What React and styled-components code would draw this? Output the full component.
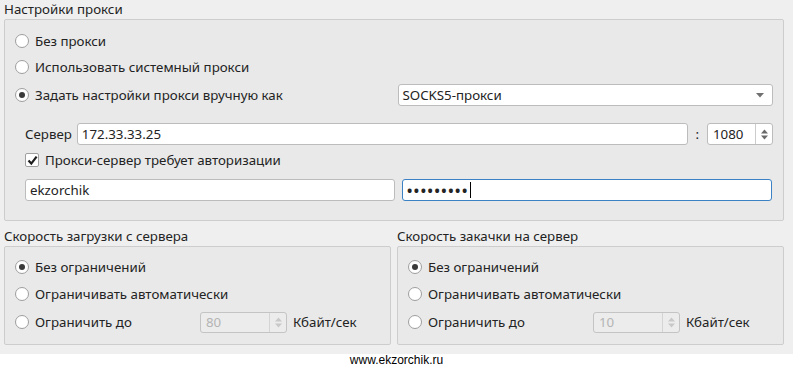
import React from 'react';
import styled, { createGlobalStyle } from 'styled-components';

const Global = createGlobalStyle`
  html, body { margin: 0; padding: 0; background: #ffffff; }
  body { font-family: "Noto Sans", "DejaVu Sans", sans-serif; font-size: 13.3px; color: #232323; }
`;

const Page = styled.div`
  width: 793px;
  height: 368px;
  display: flex;
  flex-direction: column;
`;

const Window = styled.div`
  height: 354px;
  box-sizing: border-box;
  background: #efefef;
  padding: 0 9px 0 4px;
  display: flex;
  flex-direction: column;
`;

const GroupTitle = styled.div`
  height: 19px;
  line-height: 19px;
  white-space: nowrap;
`;

const Frame = styled.div`
  border: 1px solid #cdcdcd;
  border-radius: 2px;
  background: #e9e9e9;
  padding: ${p => p.$pad};
  display: flex;
  flex-direction: column;
`;

const Row = styled.div`
  height: 24px;
  display: flex;
  align-items: center;
  margin-top: ${p => p.$mt || 0}px;
  padding-left: ${p => p.$indent || 0}px;
  white-space: nowrap;
`;

const Split = styled.div`
  display: grid;
  grid-template-columns: 1fr 1fr;
  column-gap: 7px;
  align-items: center;
  height: 24px;
  margin-top: ${p => p.$mt || 0}px;
  padding: ${p => p.$pad || 0};
`;

const RadioDot = styled.span`
  width: 12px;
  height: 12px;
  border-radius: 50%;
  border: 1px solid #9e9e9e;
  background: #ffffff;
  display: inline-flex;
  align-items: center;
  justify-content: center;
  margin-right: 6px;
  flex: none;
  &::after {
    content: '';
    width: 6px;
    height: 6px;
    border-radius: 50%;
    background: ${p => (p.$on ? '#3a3a3a' : 'transparent')};
  }
`;

const Label = styled.span`
  display: inline-flex;
  align-items: center;
  white-space: nowrap;
`;

const Radio = ({ on, children }) => (
  <Label>
    <RadioDot $on={on} />
    {children}
  </Label>
);

const CheckBox = styled.span`
  width: 12px;
  height: 12px;
  border: 1px solid #a0a0a0;
  border-radius: 2px;
  background: #ffffff;
  margin-right: 6px;
  display: inline-flex;
  align-items: center;
  justify-content: center;
  flex: none;
`;

const Field = styled.div`
  height: 22px;
  box-sizing: border-box;
  border: 1px solid ${p => (p.$focus ? '#3a82c4' : '#bcbcbc')};
  border-radius: 3px;
  background: #ffffff;
  display: flex;
  align-items: center;
  padding-left: 4px;
  min-width: 0;
  flex: ${p => (p.$grow ? 1 : 'none')};
`;

const Combo = styled(Field)`
  justify-content: space-between;
  padding-right: 8px;
`;

const Spin = styled.div`
  width: ${p => p.$w}px;
  height: ${p => p.$h}px;
  box-sizing: border-box;
  border: 1px solid ${p => (p.$off ? '#c4c4c4' : '#bcbcbc')};
  border-radius: 3px;
  background: ${p => (p.$off ? '#ececec' : '#ffffff')};
  color: ${p => (p.$off ? '#b4b4b4' : '#232323')};
  display: flex;
  align-items: center;
  flex: none;
`;

const SpinText = styled.span`
  flex: 1;
  padding-left: 5px;
`;

const SpinArrows = styled.span`
  width: 16px;
  height: 100%;
  border-left: 1px solid ${p => (p.$off ? '#d4d4d4' : '#cccccc')};
  display: flex;
  align-items: center;
  justify-content: center;
`;

const Caret = styled.span`
  display: inline-block;
  width: 1px;
  height: 16px;
  background: #000;
  margin-left: 1px;
`;

const Dots = styled.span`
  letter-spacing: 1.6px;
  font-size: 14px;
  font-weight: bold;
`;

const Colon = styled.span`
  margin: 0 8px 0 7px;
`;

const ServerLabel = styled.span`
  margin-right: 5px;
`;

const Pair = styled.div`
  display: grid;
  grid-template-columns: 1fr 1fr;
  column-gap: 6px;
  margin-top: 6px;
`;

const LimitRow = styled(Row)`
  display: grid;
  grid-template-columns: 179px 87px auto;
  column-gap: 6px;
`;

const Footer = styled.div`
  flex: 1;
  text-align: center;
  font-family: "Liberation Sans", Arial, sans-serif;
  font-size: 12px;
  line-height: 12px;
  color: #000;
`;

const UpDown = ({ color }) => (
  <svg width="9" height="13" viewBox="0 0 9 13">
    <path d="M1 5.5 L4.5 1.5 L8 5.5 Z" fill={color} />
    <path d="M1 7.5 L4.5 11.5 L8 7.5 Z" fill={color} />
  </svg>
);

const Down = () => (
  <svg width="8" height="5" viewBox="0 0 8 5">
    <path d="M0 0 L8 0 L4 4.5 Z" fill="#707070" />
  </svg>
);

const Tick = () => (
  <svg width="11" height="11" viewBox="0 0 11 11">
    <path d="M1.5 5.6 L4.3 8.6 L9.6 1.6" stroke="#1e1e1e" strokeWidth="2.2" fill="none" />
  </svg>
);

const SpeedGroup = ({ title, value }) => (
  <div>
    <GroupTitle>{title}</GroupTitle>
    <Frame $pad="8px 10px 10px 10px">
      <Row><Radio on>Без ограничений</Radio></Row>
      <Row $mt={3}><Radio>Ограничивать автоматически</Radio></Row>
      <LimitRow $mt={4}>
        <Radio>Ограничить до</Radio>
        <Spin $w={87} $h={21} $off>
          <SpinText>{value}</SpinText>
          <SpinArrows $off><UpDown color="#c8c8c8" /></SpinArrows>
        </Spin>
        <span>Кбайт/сек</span>
      </LimitRow>
    </Frame>
  </div>
);

export default function App() {
  return (
    <Page>
      <Global />
      <Window>
        <GroupTitle>Настройки прокси</GroupTitle>
        <Frame $pad="9px 10px 18px 10px">
          <Row><Radio>Без прокси</Radio></Row>
          <Row $mt={2}><Radio>Использовать системный прокси</Radio></Row>
          <Split $mt={4}>
            <Radio on>Задать настройки прокси вручную как</Radio>
            <Combo>
              <span>SOCKS5-прокси</span>
              <Down />
            </Combo>
          </Split>
          <Row $mt={15} $indent={10}>
            <ServerLabel>Сервер</ServerLabel>
            <Field $grow>172.33.33.25</Field>
            <Colon>:</Colon>
            <Spin $w={66} $h={22}>
              <SpinText>1080</SpinText>
              <SpinArrows><UpDown color="#6a6a6a" /></SpinArrows>
            </Spin>
          </Row>
          <Row $mt={2} $indent={10}>
            <Label>
              <CheckBox><Tick /></CheckBox>
              Прокси-сервер требует авторизации
            </Label>
          </Row>
          <Split $mt={6} $pad="0 1px 0 10px">
            <Field>ekzorchik</Field>
            <Field $focus>
              <Dots>•••••••••</Dots>
              <Caret />
            </Field>
          </Split>
        </Frame>
        <Pair>
          <SpeedGroup title="Скорость загрузки с сервера" value="80" />
          <SpeedGroup title="Скорость закачки на сервер" value="10" />
        </Pair>
      </Window>
      <Footer>www.ekzorchik.ru</Footer>
    </Page>
  );
}
